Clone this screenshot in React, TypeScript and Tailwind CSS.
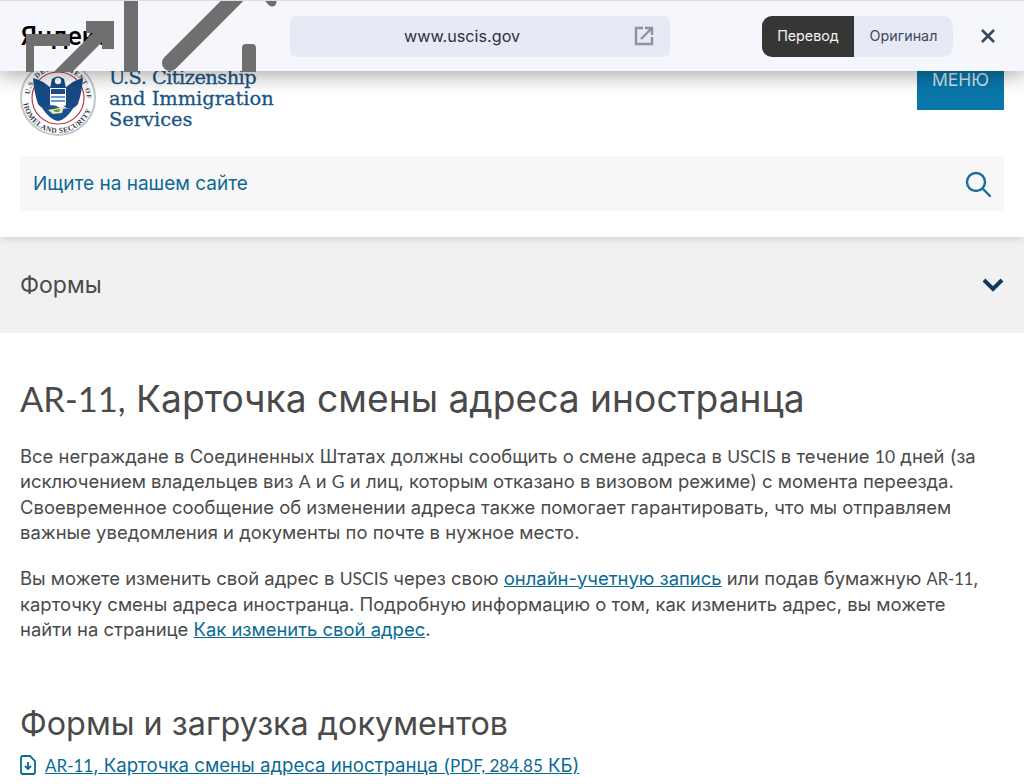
import React from "react";

const F = "font-['Inter','Roboto',sans-serif]";

function Lat({ children }: { children: React.ReactNode }) {
  return <span className="font-['Lato',sans-serif] text-[17.5px]">{children}</span>;
}

function Seal() {
  return (
    <svg width="76" height="76" viewBox="0 0 76 76" className="shrink-0">
      <circle cx="38" cy="38" r="37" fill="#fff" stroke="#c4c6c8" strokeWidth="2" />
      <circle cx="38" cy="38" r="26" fill="#fff" stroke="#b8394c" strokeWidth="1.2" />
      <path d="M13 18 Q22 20 31 28 L33 46 Q24 52 18 44 Q14 32 13 18Z" fill="#174a85" />
      <path d="M63 18 Q54 20 45 28 L43 46 Q52 52 58 44 Q62 32 63 18Z" fill="#174a85" />
      <path d="M32 19 Q38 14 44 19 L46 28 L30 28Z" fill="#174a85" />
      <circle cx="38" cy="21" r="3.2" fill="#fff" />
      <path d="M30 28 H46 V45 Q38 52 30 45Z" fill="#fff" />
      <path d="M31 29 H45 V34 H31Z" fill="#1c4f8f" />
      <path d="M31 36 H45 V38 H31Z M31 40 H45 V42 H31Z" fill="#6f9bc4" />
      <path d="M22 48 Q34 43 38 47 Q44 50 54 47 Q46 60 38 61 Q30 60 22 48Z" fill="#1c4f8f" />
      <path d="M28 50 L44 47 L42 53 L33 54Z" fill="#e4ecb8" />
      <path d="M33 50 L40 49 L39 52 L35 52Z" fill="#6fa040" />
      <path id="sealTop" d="M9.5 38 A28.5 28.5 0 0 1 66.5 38" fill="none" />
      <path id="sealBottom" d="M3 38 A35 35 0 0 0 73 38" fill="none" />
      <text fontSize="7" fontWeight="700" fill="#34404f" fontFamily="Liberation Serif, serif" letterSpacing="0.7">
        <textPath href="#sealTop" startOffset="4%">U.S. DEPARTMENT OF</textPath>
      </text>
      <text fontSize="7.5" fontWeight="700" fill="#34404f" fontFamily="Liberation Serif, serif" letterSpacing="0.4">
        <textPath href="#sealBottom" startOffset="5%">HOMELAND SECURITY</textPath>
      </text>
    </svg>
  );
}

function Overlay() {
  return (
    <svg width="1024" height="71" viewBox="0 0 1024 71" className="absolute left-0 top-0">
      <g fill="#6f6f6f">
        <rect x="26" y="33" width="8" height="38" />
        <rect x="26" y="33" width="44" height="12" />
        <rect x="124" y="0" width="14" height="71" />
        <rect x="242" y="43" width="14" height="34" rx="4" />
      </g>
      <g fill="none" stroke="#6f6f6f">
        <path d="M56 78 L107 27" strokeWidth="13" />
        <path d="M86 26 H108 V48" strokeWidth="12" />
        <path d="M170 62 L240 -8" strokeWidth="16" strokeLinecap="round" />
        <path d="M266 -6 L272 1" strokeWidth="9" strokeLinecap="round" />
      </g>
    </svg>
  );
}

export default function App() {
  return (
    <div className={`relative h-[784px] w-[1024px] overflow-hidden bg-white text-[#4a4a4a] ${F}`}>
      <div className="absolute inset-x-0 top-0 z-10 flex h-[71px] items-center border-t border-[#dcdde2] bg-[#f6f7fc] shadow-[0_4px_20px_rgba(0,0,0,0.35)]">
        <div className="w-[290px] pl-[21px] pt-[1px] font-['Roboto',sans-serif] text-[26px] font-medium text-black">Яндекс</div>
        <div className="flex h-[41px] w-[380px] items-center rounded-[6px] bg-[#e7e9f4] pl-[114px] pr-[16px] font-['Inter',sans-serif] text-[16.2px] text-[#2a3342]">
          <span className="flex-1">www.uscis.gov</span>
          <svg width="20" height="20" viewBox="0 0 20 20" fill="none" stroke="#8e92a0" strokeWidth="2.4">
            <path d="M9 2 H2 V18 H18 V11" />
            <path d="M7 13 L17 3 M11 2 H18 V9" />
          </svg>
        </div>
        <div className="ml-[92px] flex h-[41px] w-[191px] overflow-hidden rounded-[10px] bg-[#e7e9f4] font-['Inter',sans-serif] text-[14.3px]">
          <div className="flex w-[92px] items-center justify-center bg-[#363636] text-[#f2f2f2]">Перевод</div>
          <div className="flex flex-1 items-center justify-center text-[#3d4a5c]">Оригинал</div>
        </div>
        <svg width="14" height="14" viewBox="0 0 14 14" className="ml-[28px]" stroke="#384858" strokeWidth="2.6" fill="none">
          <path d="M1 1 L13 13 M13 1 L1 13" />
        </svg>
        <Overlay />
      </div>

      <header className="relative flex h-[237px] flex-col px-[20px] shadow-[0_2px_8px_rgba(0,0,0,0.12)]">
        <div className="flex h-[156px] items-start justify-between pt-[60px]">
          <div className="flex items-center gap-[13px]">
            <Seal />
            <div className="mt-[1px] font-['DejaVu_Serif',serif] text-[19.4px] leading-[21px] text-[#1a5585] [-webkit-text-stroke:0.3px_#1a5585]">
              <div className="tracking-[-0.55px]">U.S. Citizenship</div>
              <div>and Immigration</div>
              <div>Services</div>
            </div>
          </div>
          <div className="-mt-[60px] flex h-[110px] w-[87px] items-end justify-center bg-[#0a76a9] pb-[17px] text-[17.5px] text-[#cfe3ee]">МЕНЮ</div>
        </div>
        <div className="flex h-[55px] items-center justify-between bg-[#f7f7f7] pl-[13px] pr-[12px] pt-[2px] text-[19px] text-[#0b6a94]">
          <span>Ищите на нашем сайте</span>
          <svg width="28" height="28" viewBox="0 0 28 28" fill="none" stroke="#166f97" strokeWidth="2.4" strokeLinecap="round" className="-mt-[2px]">
            <circle cx="12" cy="12" r="9" />
            <path d="M19 19 L26 26" />
          </svg>
        </div>
      </header>

      <div className="flex h-[96px] items-center justify-between bg-[#f1f1f1] pl-[20px] pr-[20px] text-[23px] text-[#4a4a4a]">
        <span>Формы</span>
        <svg width="22" height="14" viewBox="0 0 22 14" fill="none" stroke="#0e3a68" strokeWidth="4">
          <path d="M2 2 L11 11 L20 2" />
        </svg>
      </div>

      <main className="px-[20px] pt-[44px]">
        <h1 className="text-[37.2px] leading-[44px]"><span className="font-['Lato',sans-serif] text-[34.5px]">AR-11,</span> Карточка смены адреса иностранца</h1>
        <p className="mt-[23px] text-[18.45px] leading-[25.4px]">
          Все неграждане в Соединенных Штатах должны сообщить о смене адреса в <Lat>USCIS</Lat> в течение <Lat>10</Lat> дней (за исключением владельцев виз <Lat>A</Lat> и <Lat>G</Lat> и лиц, которым отказано в визовом режиме) с момента переезда. Своевременное сообщение об изменении адреса также помогает гарантировать, что мы отправляем важные уведомления и документы по почте в нужное место.
        </p>
        <p className="mt-[20px] max-w-[965px] text-[18.45px] leading-[25.4px]">
          Вы можете изменить свой адрес в <Lat>USCIS</Lat> через свою <a className="text-[#0b6a94] underline">онлайн-учетную запись</a> или подав бумажную <span className="font-['Lato',sans-serif] text-[16.5px]">AR-11</span>, карточку смены адреса иностранца. Подробную информацию о том, как изменить адрес, вы можете найти на странице <a className="text-[#0b6a94] underline">Как изменить свой адрес</a>.
        </p>
        <h2 className="mt-[62px] text-[32.3px] leading-[38px]">Формы и загрузка документов</h2>
        <div className="mt-[9px] flex items-center gap-[9px] text-[18.6px] leading-[26px] text-[#0b6a94]">
          <svg width="16" height="20" viewBox="0 0 16 20" fill="none" stroke="#0b6a94" strokeWidth="1.8">
            <path d="M1 3 Q1 1 3 1 H10 L15 6 V17 Q15 19 13 19 H3 Q1 19 1 17Z" />
            <path d="M8 7 V14 M5 11 L8 14 L11 11" />
          </svg>
          <a className="underline"><span className="font-['Lato',sans-serif] text-[17px]">AR-11</span>, Карточка смены адреса иностранца (<span className="font-['Lato',sans-serif] text-[17px]">PDF, 284.85</span> КБ)</a>
        </div>
      </main>
    </div>
  );
}
